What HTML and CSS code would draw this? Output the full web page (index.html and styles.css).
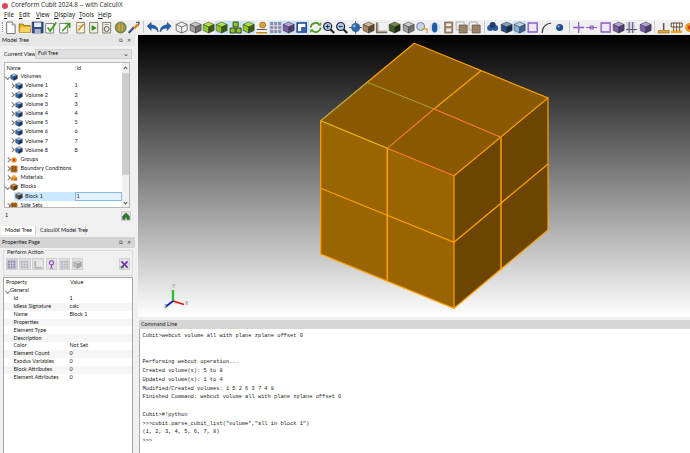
FILE: index.html
```html
<!DOCTYPE html>
<html lang="en">
<head>
<meta charset="utf-8">
<title>Coreform Cubit 2024.8 -- with CalculiX</title>
<link rel="stylesheet" href="styles.css">
</head>
<body>
<svg class="defs" width="0" height="0" aria-hidden="true">
  <defs>
    <symbol id="cube" viewBox="0 0 13 13"><path class="ft" d="M6.5 1 12 3.5 6.5 6 1 3.5z"/><path class="fl" d="M1 3.5 6.5 6v6L1 9.5z"/><path class="fr" d="M12 3.5 6.5 6v6l5.5-2.5z"/></symbol>
    <symbol id="page" viewBox="0 0 13 13"><path d="M2.5 1H8l3 3v8.500H2.500z" fill="#fff" stroke="#666" stroke-width=".9"/><path d="M8 1v3h3" fill="#ddd" stroke="#666" stroke-width=".7"/></symbol>
    <symbol id="open" viewBox="0 0 13 13"><path d="M1 3h4l1 1.500h6V11.500H1z" fill="#e8b020" stroke="#8a6510" stroke-width=".8"/><path d="M1 11.500 3 6h9.500l-1 5.500z" fill="#f7d360"/></symbol>
    <symbol id="save" viewBox="0 0 13 13"><path d="M1 1h11v11H1z" fill="#2d4f86" stroke="#1e2f55" stroke-width=".6"/><path d="M3 1.500h7v4.500H3z" fill="#e8eef7"/><path d="M3.500 8h6v4h-6z" fill="#a7b5ca"/></symbol>
    <symbol id="check" viewBox="0 0 13 13"><path d="M1.500 2.500h8v9.500h-8z" fill="#fff" stroke="#666" stroke-width=".8"/><path d="M3.500 6.500 6 10l6-8.500" fill="none" stroke="#3f9a1f" stroke-width="1.800"/></symbol>
    <symbol id="send" viewBox="0 0 13 13"><path d="M1.500 2.500h8v9.500h-8z" fill="#fff" stroke="#666" stroke-width=".8"/><path d="M4 10 11 3M7 2.500h4.500V7" fill="none" stroke="#3f9a1f" stroke-width="1.700"/></symbol>
    <symbol id="journal" viewBox="0 0 13 13"><path d="M2.500 1.500h8v10.500h-8z" fill="#fbf2d8" stroke="#7a6a48" stroke-width=".8"/><path d="M4 9.500 9.500 3" stroke="#c98a1c" stroke-width="1.500"/><path d="M4 5h3" stroke="#888" stroke-width=".7"/></symbol>
    <symbol id="play" viewBox="0 0 13 13"><path d="M2.500 1.500h8v10.500h-8z" fill="#f4efe0" stroke="#6c6c58" stroke-width=".8"/><path d="M4.500 4 9.500 7l-5 3z" fill="#2d8f22"/></symbol>
    <symbol id="script" viewBox="0 0 13 13"><path d="M2.500 1.500h8v10.500h-8z" fill="#f4efe0" stroke="#6c6c58" stroke-width=".8"/><circle cx="6.500" cy="8" r="2.500" fill="none" stroke="#555" stroke-width="1"/><path d="M4.500 3.500h4" stroke="#888" stroke-width=".8"/></symbol>
    <symbol id="pause" viewBox="0 0 13 13"><circle cx="6.500" cy="6.500" r="5.500" fill="#8d9a54" stroke="#5a6430" stroke-width=".7"/><path d="M5 3.500v6M8 3.500v6" stroke="#e6a62a" stroke-width="1.500"/></symbol>
    <symbol id="wand" viewBox="0 0 13 13"><path d="M1.500 12 7 6" stroke="#2c4c86" stroke-width="2"/><path d="M6 7 9.500 2.500l2.500 2L8 8z" fill="#d98a1c"/><path d="M9 1.500 12 1 11.500 4" fill="none" stroke="#333" stroke-width="1"/></symbol>
    <symbol id="undo" viewBox="0 0 13 13"><path d="M1 5 5 1.500V4c4 0 7 2 7 7-1.500-3-3.500-4-7-4v2.500z" fill="#1f62ad" stroke="#123a70" stroke-width=".5"/></symbol>
    <symbol id="redo" viewBox="0 0 13 13"><path d="M12 5 8 1.500V4C4 4 1 6 1 11c1.500-3 3.500-4 7-4v2.500z" fill="#1f62ad" stroke="#123a70" stroke-width=".5"/></symbol>
    <symbol id="wire" viewBox="0 0 13 13"><path d="M6.500 1 12 3.500v6L6.500 12 1 9.500v-6zM1 3.500 6.500 6 12 3.500M6.500 6v6" fill="#f2f2f2" stroke="#666" stroke-width=".9"/></symbol>
    <symbol id="trio" viewBox="0 0 13 13"><path class="fl" d="M4 1h5v5H4zM1 7h5v5H1zM7 7h5v5H7z"/><path d="M4 1h5v5H4zM1 7h5v5H1zM7 7h5v5H7z" fill="none" stroke="#304014" stroke-width=".6"/></symbol>
    <symbol id="person" viewBox="0 0 13 13"><circle cx="7.500" cy="4" r="3" fill="#e0a030" stroke="#7b5a18" stroke-width=".6"/><path d="M1 11h11v1.500H1z" fill="#c98a1c"/><path d="M1.500 8.500h10" stroke="#555"/></symbol>
    <symbol id="grid" viewBox="0 0 13 13"><path d="M1 1h11v11H1z" fill="#8e8ea8"/><path d="M4.700 1v11M8.400 1v11M1 4.700h11M1 8.400h11" stroke="#e4e4ee" stroke-width=".9"/></symbol>
    <symbol id="frame" viewBox="0 0 13 13"><path d="M2 2h9v9H2z" fill="#fff" stroke="#1d3e8a" stroke-width="1.500"/><path d="M6 6h5v5H6z" fill="#3b5cb5"/></symbol>
    <symbol id="refresh" viewBox="0 0 13 13"><path d="M1.500 6.500a5 5 0 0 1 9-2.500M11.500 6.500a5 5 0 0 1-9 2.500" fill="none" stroke="#4a9a22" stroke-width="1.700"/><path d="M8.500 4.500h3.500V1zM4.500 8.500H1V12z" fill="#4a9a22"/></symbol>
    <symbol id="zoomin" viewBox="0 0 13 13"><path d="m8 8 4 4" stroke="#222" stroke-width="2"/><circle cx="5.500" cy="5.500" r="4" fill="#a9c8e8" stroke="#223" stroke-width="1.200"/><path d="M3.500 5.500h4M5.500 3.500v4" stroke="#123" stroke-width=".9"/></symbol>
    <symbol id="zoomout" viewBox="0 0 13 13"><path d="m8 8 4 4" stroke="#222" stroke-width="2"/><circle cx="5.500" cy="5.500" r="4" fill="#a9c8e8" stroke="#223" stroke-width="1.200"/><path d="M3.500 5.500h4" stroke="#123" stroke-width=".9"/></symbol>
    <symbol id="globe" viewBox="0 0 13 13"><circle cx="6.500" cy="6.500" r="4.500" fill="#2f69ad"/><path d="M6.500 0v13M0 6.500h13" stroke="#3c5f8c" stroke-width="1"/><circle cx="5" cy="5" r="1.500" fill="#7eb0e0"/></symbol>
    <symbol id="ell" viewBox="0 0 13 13"><path d="M1 1.500h11v10.500H1z" fill="#bdb6aa"/><path d="M1.500 1.500v10h10.500" fill="none" stroke="#7a6c58" stroke-width="1.500"/><path d="M3.500 1.500h8.500v8H3.500z" fill="#f2f2f2"/></symbol>
    <symbol id="ring" viewBox="0 0 13 13"><circle cx="5.500" cy="5.500" r="4" fill="#c8d4e4" stroke="#7185a5"/><path d="M7 8h5v4" fill="none" stroke="#dca43a" stroke-width="1.300"/></symbol>
    <symbol id="orb" viewBox="0 0 13 13"><ellipse cx="6.500" cy="6.500" rx="5.500" ry="5" fill="#d6e2f1"/><ellipse cx="6.500" cy="6.500" rx="2.700" ry="5" fill="#1d5fa6"/></symbol>
    <symbol id="panels" viewBox="0 0 13 13"><path d="M2.500 1h8v11h-8z" fill="#a58a6a" stroke="#65584a" stroke-width=".7"/><path d="M4 2.500h5V5H4zM4 7.500h5v3H4z" fill="#eee"/></symbol>
    <symbol id="tile" viewBox="0 0 13 13"><path d="M1 1h8v8H1z" fill="#eee" stroke="#999" stroke-width=".7"/><path d="M4 4h8v8H4z" fill="#9b8468" stroke="#5d5040" stroke-width=".7"/></symbol>
    <symbol id="blob" viewBox="0 0 13 13"><circle cx="4" cy="7" r="3" fill="#2b5a96"/><circle cx="9" cy="7" r="3" fill="#2b5a96"/><circle cx="6.500" cy="4" r="3" fill="#1d3c6d"/></symbol>
    <symbol id="curve" viewBox="0 0 13 13"><path d="M2 12C2 7 5 3 11 2" fill="none" stroke="#333" stroke-width="1.200"/></symbol>
    <symbol id="ball" viewBox="0 0 13 13"><circle cx="6.500" cy="6.500" r="3.500" fill="#234e8c"/><circle cx="5.500" cy="5.500" r="1" fill="#9fc4ea"/></symbol>
    <symbol id="plus" viewBox="0 0 13 13"><path d="M6.500 1v11M1 6.500h11" stroke="#8a5cc6" stroke-width="1.300"/></symbol>
    <symbol id="minus" viewBox="0 0 13 13"><path d="M1 6.500h11M5 5h3v3H5z" fill="none" stroke="#8a5cc6" stroke-width="1.100"/></symbol>
    <symbol id="square" viewBox="0 0 13 13"><path d="M2 2h9v9H2z" fill="#efe7fa" stroke="#8a5cc6" stroke-width="1.400"/></symbol>
    <symbol id="axes" viewBox="0 0 13 13"><path d="M1 1h9v11H1z" fill="#d7d3e2"/><path d="M4 1v11M7.500 1v11M1 8.500h11" stroke="#5c5478" stroke-width="1"/></symbol>
    <symbol id="plate" viewBox="0 0 13 13"><path d="M6.500 2v7" stroke="#555" stroke-width="1.500"/><path d="M1 9.500h11V12H1z" fill="#e8a628" stroke="#8c641a" stroke-width=".6"/></symbol>
    <symbol id="table" viewBox="0 0 13 13"><path d="M1 2h11v4H1z" fill="#fff" stroke="#5f4a2c"/><path d="M1 9.500h11V12H1z" fill="#e8a628"/><path d="M3.500 2v8M9.500 2v8M6.500 2v8" stroke="#5f4a2c" stroke-width=".9"/></symbol>
    <symbol id="gear" viewBox="0 0 13 13"><circle cx="6.500" cy="6.500" r="4.500" fill="#e59a22"/><circle cx="6.500" cy="6.500" r="2" fill="#d33b1d"/></symbol>
    <symbol id="pin" viewBox="0 0 13 13"><circle cx="6.500" cy="4" r="3" fill="none" stroke="#8a3ec4" stroke-width="1.500"/><path d="M6.500 7v3M4.500 11.500h4" stroke="#8a3ec4" stroke-width="1.500"/></symbol>
    <symbol id="tools" viewBox="0 0 13 13"><path d="m2 2 9 9M11 2l-9 9" stroke="#6d2fb8" stroke-width="2.300"/><path d="M1 9h4v3H1z" fill="#2e7d32"/></symbol>
    <symbol id="house" viewBox="0 0 13 13"><path d="M1 7 6.500 1.500 12 7v5H8V8.500H5V12H1z" fill="#2e7d32" stroke="#143c18" stroke-width=".7"/></symbol>
    <symbol id="grid-o" viewBox="0 0 13 13"><path d="M1 1h11v11H1z" fill="#c9771e"/><path d="M4.700 1v11M8.400 1v11M1 4.700h11M1 8.400h11" stroke="#5a3410" stroke-width=".9"/></symbol>
    <symbol id="blob-o" viewBox="0 0 13 13"><circle cx="4" cy="8" r="3" fill="#d98a1c"/><circle cx="9" cy="8" r="3" fill="#c96a1c"/><circle cx="6.500" cy="4.500" r="3" fill="#e8aa3c"/></symbol>
  </defs>
</svg>

<div class="app">
  <header class="titlebar">
    <span class="logo"></span>
    <span>Coreform Cubit 2024.8 -- with CalculiX</span>
  </header>

  <nav class="menubar">
    <span class="m1"><u>F</u>ile</span>
    <span class="m2"><u>E</u>dit</span>
    <span class="m3"><u>V</u>iew</span>
    <span class="m4"><u>D</u>isplay</span>
    <span class="m5"><u>T</u>ools</span>
    <span class="m6"><u>H</u>elp</span>
  </nav>

  <div class="toolbar">
    <span class="grip"></span>
    <svg class="ti"><use href="#page"/></svg>
    <svg class="ti"><use href="#open"/></svg>
    <svg class="ti"><use href="#save"/></svg>
    <svg class="ti"><use href="#check"/></svg>
    <svg class="ti"><use href="#send"/></svg>
    <span class="gap-s"></span>
    <svg class="ti"><use href="#journal"/></svg>
    <svg class="ti"><use href="#play"/></svg>
    <svg class="ti"><use href="#script"/></svg>
    <svg class="ti"><use href="#pause"/></svg>
    <svg class="ti"><use href="#wand"/></svg>
    <span class="sep sep-w"></span>
    <svg class="ti"><use href="#undo"/></svg>
    <svg class="ti"><use href="#redo"/></svg>
    <span class="gap-s"></span>
    <svg class="ti"><use href="#wire"/></svg>
    <svg class="ti c-grey"><use href="#cube"/></svg>
    <svg class="ti c-green"><use href="#cube"/></svg>
    <svg class="ti c-green on"><use href="#cube"/></svg>
    <svg class="ti c-green on"><use href="#trio"/></svg>
    <svg class="ti c-green on"><use href="#cube"/></svg>
    <svg class="ti"><use href="#person"/></svg>
    <svg class="ti on"><use href="#grid"/></svg>
    <svg class="ti c-purple on"><use href="#cube"/></svg>
    <svg class="ti on"><use href="#frame"/></svg>
    <svg class="ti"><use href="#refresh"/></svg>
    <svg class="ti"><use href="#zoomin"/></svg>
    <svg class="ti"><use href="#zoomout"/></svg>
    <svg class="ti"><use href="#globe"/></svg>
    <svg class="ti c-tan"><use href="#cube"/></svg>
    <svg class="ti"><use href="#ell"/></svg>
    <svg class="ti c-dkgreen"><use href="#cube"/></svg>
    <svg class="ti c-grey"><use href="#cube"/></svg>
    <svg class="ti"><use href="#ring"/></svg>
    <svg class="ti"><use href="#orb"/></svg>
    <svg class="ti"><use href="#panels"/></svg>
    <svg class="ti"><use href="#tile"/></svg>
    <svg class="ti"><use href="#tile"/></svg>
    <span class="sep sep-m"></span>
    <svg class="ti"><use href="#blob"/></svg>
    <svg class="ti c-navy"><use href="#cube"/></svg>
    <svg class="ti c-sky on"><use href="#cube"/></svg>
    <svg class="ti c-sky"><use href="#square"/></svg>
    <svg class="ti"><use href="#curve"/></svg>
    <svg class="ti"><use href="#ball"/></svg>
    <span class="sep sep-w"></span>
    <svg class="ti"><use href="#plus"/></svg>
    <svg class="ti"><use href="#minus"/></svg>
    <svg class="ti"><use href="#square"/></svg>
    <svg class="ti c-purple"><use href="#cube"/></svg>
    <svg class="ti"><use href="#axes"/></svg>
    <svg class="ti c-purple"><use href="#cube"/></svg>
    <span class="sep sep-m"></span>
    <svg class="ti"><use href="#plate"/></svg>
    <svg class="ti"><use href="#table"/></svg>
    <svg class="ti"><use href="#gear"/></svg>
  </div>

  <main class="workspace">
    <aside class="side">
      <section class="dock tree-dock">
        <div class="dock-title light">
          <span>Model Tree</span>
          <span class="dock-btns"><span>&#10697;</span><span>&#10005;</span></span>
        </div>
        <div class="view-row">
          <span class="view-label">Current View</span>
          <span class="combo"><span>Full Tree</span><span class="chev">&#8964;</span></span>
        </div>
        <div class="tree">
          <div class="tree-body">
            <div class="tree-head"><span>Name</span><span>Id</span></div>
            <div class="row l0"><span class="open"></span><svg class="ri c-vol"><use href="#cube"/></svg><span class="nm">Volumes</span></div>
            <div class="row l1"><span class="closed"></span><svg class="ri c-vol"><use href="#cube"/></svg><span class="nm">Volume 1</span><span>1</span></div>
            <div class="row l1"><span class="closed"></span><svg class="ri c-vol"><use href="#cube"/></svg><span class="nm">Volume 2</span><span>2</span></div>
            <div class="row l1"><span class="closed"></span><svg class="ri c-vol"><use href="#cube"/></svg><span class="nm">Volume 3</span><span>3</span></div>
            <div class="row l1"><span class="closed"></span><svg class="ri c-vol"><use href="#cube"/></svg><span class="nm">Volume 4</span><span>4</span></div>
            <div class="row l1"><span class="closed"></span><svg class="ri c-vol"><use href="#cube"/></svg><span class="nm">Volume 5</span><span>5</span></div>
            <div class="row l1"><span class="closed"></span><svg class="ri c-vol"><use href="#cube"/></svg><span class="nm">Volume 6</span><span>6</span></div>
            <div class="row l1"><span class="closed"></span><svg class="ri c-vol"><use href="#cube"/></svg><span class="nm">Volume 7</span><span>7</span></div>
            <div class="row l1"><span class="closed"></span><svg class="ri c-vol"><use href="#cube"/></svg><span class="nm">Volume 8</span><span>8</span></div>
            <div class="row l0"><span class="closed"></span><svg class="ri"><use href="#gear"/></svg><span class="nm">Groups</span></div>
            <div class="row l0"><span class="closed"></span><svg class="ri"><use href="#grid-o"/></svg><span class="nm">Boundary Conditions</span></div>
            <div class="row l0"><span class="closed"></span><svg class="ri"><use href="#blob-o"/></svg><span class="nm">Materials</span></div>
            <div class="row l0"><span class="open"></span><svg class="ri c-brown"><use href="#cube"/></svg><span class="nm">Blocks</span></div>
            <div class="row l1 sel"><span class="none"></span><svg class="ri c-dark"><use href="#cube"/></svg><span class="nm">Block 1</span><span class="edit">1</span></div>
            <div class="row l0"><span class="closed"></span><svg class="ri"><use href="#grid-o"/></svg><span class="nm">Side Sets</span></div>
          </div>
          <div class="vscroll">
            <span class="arrow up"></span>
            <span class="thumb"></span>
            <span class="arrow down"></span>
          </div>
        </div>
        <div class="status-row">
          <span>1</span>
          <span class="sq-btn"><svg class="ri"><use href="#house"/></svg></span>
        </div>
      </section>

      <div class="tabs">
        <span class="tab active">Model Tree</span>
        <span class="tab">CalculiX Model Tree</span>
      </div>

      <section class="dock props-dock">
        <div class="dock-title">
          <span>Properties Page</span>
          <span class="dock-btns"><span>&#10697;</span><span>&#10005;</span></span>
        </div>
        <div class="action-box">
          <span class="action-label">Perform Action</span>
          <div class="action-row">
            <span class="act on"><svg class="ai"><use href="#grid"/></svg></span>
            <span class="act"><svg class="ai dim"><use href="#grid"/></svg></span>
            <span class="act"><svg class="ai dim"><use href="#ell"/></svg></span>
            <span class="act"><svg class="ai"><use href="#pin"/></svg></span>
            <span class="act"><svg class="ai dim"><use href="#grid"/></svg></span>
            <span class="act"><svg class="ai dim c-grey"><use href="#cube"/></svg></span>
            <span class="act right"><svg class="ai"><use href="#tools"/></svg></span>
          </div>
        </div>
        <div class="ptable">
          <div class="phead"><span>Property</span><span>Value</span></div>
          <div class="pgroup"><span class="open"></span>General</div>
          <div class="prow"><span>Id</span><span>1</span></div>
          <div class="prow alt"><span>Idless Signature</span><span>calc</span></div>
          <div class="prow"><span>Name</span><span>Block 1</span></div>
          <div class="prow alt"><span>Properties</span><span></span></div>
          <div class="prow"><span>Element Type</span><span></span></div>
          <div class="prow alt"><span>Description</span><span></span></div>
          <div class="prow"><span>Color</span><span>Not Set</span></div>
          <div class="prow alt"><span>Element Count</span><span>0</span></div>
          <div class="prow"><span>Exodus Variables</span><span>0</span></div>
          <div class="prow alt"><span>Block Attributes</span><span>0</span></div>
          <div class="prow"><span>Element Attributes</span><span>0</span></div>
        </div>
      </section>
    </aside>

    <div class="center">
      <svg class="viewport" viewBox="138 35 552 282" preserveAspectRatio="none">
        <defs>
          <linearGradient id="bg" x1="0" y1="0" x2="0" y2="1">
            <stop offset="0" stop-color="#000"/>
            <stop offset="1" stop-color="#fff"/>
          </linearGradient>
        </defs>
        <rect x="138" y="35" width="552" height="282" fill="url(#bg)"/>
        <path d="M414.300 43.300 548 98 454 175.700 320.700 120.700z" fill="#885900"/>
        <path d="M320.700 120.700 454 175.700V308.300L320.700 254z" fill="#9a6400"/>
        <path d="M454 175.700 548 98V230L454 308.300z" fill="#6c4500"/>
        <g fill="none" stroke="#ffa200" stroke-width="1.200">
          <path d="M414.300 43.300 548 98 454 175.700V308.300L320.700 254V120.700L414.300 43.300"/>
          <path d="M548 98V230L454 308.300"/>
          <path d="M320.700 188.300 454 242.300 548 164"/>
          <path d="M481 70.700 434 109"/>
          <path d="M387.300 148.300V281M501 137.300V269.300" stroke-width="1.500"/>
        </g>
        <path d="M367.300 82.300 434 109" fill="none" stroke="#b0a030" stroke-width="1"/>
        <path d="M434 109 501 137.300M434 109 387.300 148.300M387.300 148.300 454 175.700" fill="none" stroke="#ff7a30" stroke-width="1.100"/>
        <path d="M320.700 120.700 387.300 148.300" fill="none" stroke="#f0c010" stroke-width="1.100"/>
        <path d="M320.700 120.700 367.300 82.300" fill="none" stroke="#8fa860" stroke-width="1"/>
        <path d="M173 301V290" stroke="#2fc030" stroke-width="2.400"/>
        <path d="M173 301 184 304.500" stroke="#e01010" stroke-width="1.600"/>
        <path d="M173 301 166 306.500" stroke="#1020d0" stroke-width="1.800"/>
        <text class="axis" x="172" y="288">Y</text>
        <text class="axis" x="185" y="305">X</text>
        <text class="axis" x="164" y="308">Z</text>
      </svg>
      <section class="cmd">
        <div class="cmd-title">Command Line</div>
        <pre class="console">Cubit&gt;webcut volume all with plane zplane offset 0


Performing webcut operation...
Created volume(s): 5 to 8
Updated volume(s): 1 to 4
Modified/Created volumes: 1 5 2 6 3 7 4 8
Finished Command: webcut volume all with plane zplane offset 0

Cubit&gt;#!python
&gt;&gt;&gt;cubit.parse_cubit_list("volume","all in block 1")
(1, 2, 3, 4, 5, 6, 7, 8)
&gt;&gt;&gt;</pre>
      </section>
    </div>
  </main>
</div>
</body>
</html>
```

FILE: styles.css
```css
* { box-sizing: border-box; }
html, body { margin: 0; padding: 0; }
body {
  width: 690px;
  height: 453px;
  overflow: hidden;
  background: #f0f0f0;
  color: #1a1a1a;
  font-family: Lato, "Noto Sans", sans-serif;
  font-size: 5.500px;
  line-height: 1;
}
.defs { display: block; height: 0; width: 0; }
.ft { fill: var(--t, #bbb); }
.fl { fill: var(--l, #999); }
.fr { fill: var(--r, #777); }
symbol path.ft, symbol path.fl, symbol path.fr { stroke: #333; stroke-width: .5; }

.c-grey { --t: #c9c9c9; --l: #a0a0a0; --r: #707070; }
.c-green { --t: #b4e23c; --l: #8ac926; --r: #3c5a12; }
.c-dkgreen { --t: #6d8a44; --l: #3d5a24; --r: #1c2c10; }
.c-purple { --t: #b5a2dc; --l: #7a5ea8; --r: #4b3a70; }
.c-tan { --t: #d8b48a; --l: #a88460; --r: #5c4630; }
.c-navy { --t: #7fa0c8; --l: #244d86; --r: #14284a; }
.c-sky { --t: #bcd6f0; --l: #84aedc; --r: #3f6591; }
.c-vol { --t: #9cc0e8; --l: #2f6db5; --r: #17355f; }
.c-brown { --t: #d89a3c; --l: #a5671c; --r: #553410; }
.c-dark { --t: #b0b0b0; --l: #5c5c5c; --r: #2e2e2e; }

.app { display: flex; flex-direction: column; width: 690px; height: 453px; }

.titlebar {
  height: 11px;
  background: #fff;
  display: flex;
  align-items: center;
  gap: 3px;
  padding-left: 2px;
  font-family: "Noto Sans", sans-serif;
  font-size: 6.300px;
  color: #333;
}
.logo {
  width: 6px;
  height: 6px;
  border-radius: 50%;
  background: #d8455a;
  flex: none;
}

.menubar {
  height: 9px;
  background: #fff;
  display: flex;
  align-items: center;
  padding-left: 4px;
  font-family: "Noto Sans", sans-serif;
  font-size: 6.200px;
}
.menubar u { text-decoration-thickness: .5px; }
.m1 { width: 15px; }
.m2 { width: 17px; }
.m3 { width: 18px; }
.m4 { width: 25px; }
.m5 { width: 19px; }

.toolbar {
  height: 15px;
  background: #f0f0f0;
  border-bottom: 1px solid #e4e4e4;
  display: flex;
  align-items: center;
  padding-left: 2px;
  overflow: hidden;
}
.grip { width: 2.330px; height: 10px; border-left: 1px dotted #999; flex: none; }
.ti { width: 13.330px; height: 13px; flex: none; padding: 0; }
.ti.on { background: #cce4f7; }
.gap-s { width: 2.670px; flex: none; }
.sep { height: 12px; flex: none; background: linear-gradient(#c8c8c8, #c8c8c8) center / 1px 100% no-repeat; }
.sep-w { width: 5.670px; }
.sep-m { width: 4.670px; }

.workspace { flex: 1; display: flex; min-height: 0; }

.side {
  width: 138px;
  flex: none;
  display: flex;
  flex-direction: column;
  padding-right: 3px;
  background: #f0f0f0;
}

.dock-title {
  height: 11px;
  padding: 0 4px 0 2px;
  background: #d4d4d4;
  display: flex;
  align-items: center;
  justify-content: space-between;
}
.dock-title.light { background: #e6e6e6; }
.dock-btns { display: flex; gap: 4px; font-size: 5px; color: #333; }

.tree-dock { height: 191px; flex: none; display: flex; flex-direction: column; }

.view-row {
  height: 16px;
  padding: 3px 3px 0 4px;
  display: flex;
  align-items: flex-start;
  gap: 1px;
}
.view-label { width: 30px; flex: none; line-height: 10px; white-space: nowrap; }
.combo {
  flex: 1;
  height: 10px;
  background: #e1e1e1;
  border: 1px solid #cfcfcf;
  display: flex;
  align-items: center;
  justify-content: space-between;
  padding: 0 2px;
}
.chev { font-size: 7px; line-height: 4px; height: 6px; }

.tree {
  height: 146px;
  margin: 0 5px 0 4px;
  background: #fff;
  border: 1px solid #b8b8b8;
  display: flex;
  overflow: hidden;
}
.tree-body { flex: 1; min-width: 0; }
.tree-head {
  height: 9.400px;
  display: grid;
  grid-template-columns: 68px 1fr;
  align-items: end;
  padding-left: 1.500px;
  padding-bottom: 1px;
}
.tree-head span + span { border-left: 1px solid #ddd; padding-left: 1px; }

.row {
  height: 9.200px;
  display: flex;
  align-items: center;
  white-space: nowrap;
}
.row .open, .row .closed, .row .none, .pgroup .open {
  width: 5px;
  height: 5px;
  flex: none;
}
.open::before, .closed::before {
  content: "";
  display: block;
  width: 2.500px;
  height: 2.500px;
  border-right: .7px solid #777;
  border-bottom: .7px solid #777;
  margin: .5px 0 0 .5px;
}
.open::before { transform: rotate(45deg); }
.closed::before { transform: rotate(-45deg); }
.l0 { padding-left: 0; }
.l1 { padding-left: 4.500px; }
.ri { width: 8px; height: 8px; flex: none; }
.nm { padding-left: 2.500px; }
.l1 .nm { width: 52px; flex: none; }
.row.sel { background: linear-gradient(90deg, transparent 9px, #cce8ff 9px); }
.edit {
  flex: 1;
  height: 9.200px;
  background: #e5f3ff;
  border: 1px solid #7fbde8;
  line-height: 7px;
  padding-left: 1px;
}

.vscroll {
  width: 7px;
  flex: none;
  background: #f0f0f0;
  display: flex;
  flex-direction: column;
  align-items: center;
}
.thumb { width: 100%; height: 102px; background: #cdcdcd; margin: 2px 0 auto; flex: none; }
.arrow { display: block; width: 3px; height: 3px; border-left: 1px solid #555; border-top: 1px solid #555; margin: 4px 0 1px; flex: none; }
.arrow.up { transform: rotate(45deg); }
.arrow.down { transform: rotate(225deg); margin: 1px 0 3px; }

.status-row {
  flex: 1;
  padding: 3px 4px 0 5px;
  display: flex;
  justify-content: space-between;
  align-items: flex-start;
}
.status-row > span:first-child { line-height: 9px; }
.sq-btn {
  width: 10px;
  height: 10px;
  background: #e1e1e1;
  border: 1px solid #d0d0d0;
  display: flex;
  align-items: center;
  justify-content: center;
}

.tabs {
  height: 11px;
  flex: none;
  display: flex;
  align-items: stretch;
  background: #f0f0f0;
  padding: 0 0 2px 1px;
  white-space: nowrap;
}
.tab { display: flex; align-items: center; padding-left: 4px; flex: none; border-right: 1px solid #d0d0d0; }
.tab.active { background: #fff; width: 35px; }
.tab + .tab { width: 50px; }

.props-dock { flex: 1; display: flex; flex-direction: column; min-height: 0; }
.action-box {
  margin: 2px 2px 0 3px;
  height: 26px;
  border: 1px solid #dcdcdc;
  position: relative;
  padding: 7px 2px 0;
}
.action-label {
  position: absolute;
  left: 2px;
  top: -1px;
  background: #f0f0f0;
  padding: 0 1px;
}
.action-row { display: flex; gap: 1.700px; }
.act {
  width: 11.500px;
  height: 12px;
  background: #e1e1e1;
  border: 1px solid #d0d0d0;
  display: flex;
  align-items: center;
  justify-content: center;
}
.act.on { background: #cfcfe0; }
.act.right { margin-left: auto; width: 11px; }
.ai { width: 9px; height: 9px; }
.ai.dim { opacity: .5; }

.ptable {
  flex: 1;
  margin: 1px 2px 0 3px;
  background: #fff;
  border: 1px solid #a8a8a8;
  border-bottom: 0;
}
.phead {
  height: 9px;
  display: grid;
  grid-template-columns: 64px 1fr;
  align-items: center;
  padding: 0 0 0 2px;
}
.pgroup {
  height: 7.900px;
  display: flex;
  align-items: center;
  padding-left: 1px;
}
.prow {
  height: 7.900px;
  display: grid;
  grid-template-columns: 56px 1fr;
  align-items: center;
  padding-left: 9.500px;
  white-space: nowrap;
}
.prow.alt { background: #f5f5f5; }

.center { flex: 1; min-width: 0; display: flex; flex-direction: column; }
.viewport { display: block; width: 552px; height: 282px; flex: none; }
.axis { font-family: "Liberation Sans", sans-serif; font-size: 5px; fill: #777; }

.cmd { flex: 1; min-height: 0; display: flex; flex-direction: column; padding: 3px 0 0 1px; }
.cmd-title {
  height: 9px;
  flex: none;
  background: #d6d6d6;
  display: flex;
  align-items: center;
  padding-left: 2px;
}
.console {
  flex: 1;
  margin: 0;
  background: #fff;
  border-left: 1px solid #a8a8a8;
  padding: 3px 0 0 2.500px;
  font-family: "Liberation Mono", "DejaVu Sans Mono", monospace;
  font-size: 5.350px;
  line-height: 8.750px;
  overflow: hidden;
  color: #222;
}
```
